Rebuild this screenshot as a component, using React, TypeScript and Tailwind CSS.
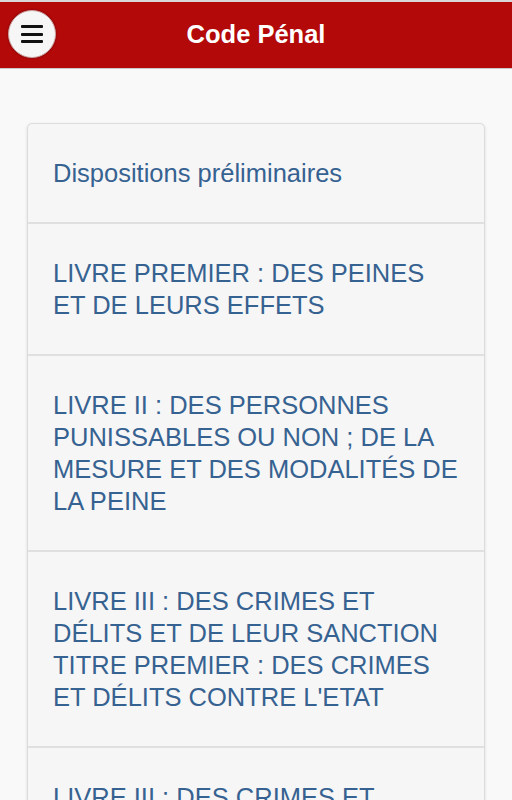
import React from "react";

const items = [
  ["Dispositions préliminaires"],
  ["LIVRE PREMIER : DES PEINES", "ET DE LEURS EFFETS"],
  ["LIVRE II : DES PERSONNES", "PUNISSABLES OU NON ; DE LA", "MESURE ET DES MODALITÉS DE", "LA PEINE"],
  ["LIVRE III : DES CRIMES ET", "DÉLITS ET DE LEUR SANCTION", "TITRE PREMIER : DES CRIMES", "ET DÉLITS CONTRE L'ETAT"],
  ["LIVRE III : DES CRIMES ET", "DÉLITS ET DE LEUR SANCTION"],
];

export default function App() {
  return (
    <div className="w-[512px] h-[800px] overflow-hidden bg-[#f9f9f9]" style={{ fontFamily: '"Liberation Sans", Arial, sans-serif' }}>
      <div className="h-[2px] bg-[#d8d8d8]" />
      <header className="relative h-[67px] bg-[#b30909] border-b border-[#c8c8c8] flex items-center justify-center">
        <button className="absolute left-[8px] top-[8px] w-[48px] h-[48px] rounded-full bg-[#f6f6f6] border border-[#cfa0a0] shadow-[0_0_2px_rgba(0,0,0,0.4)] flex flex-col items-center justify-center gap-[4.5px]">
          <span className="block w-[22px] h-[3px] bg-[#111] rounded-[1px]" />
          <span className="block w-[22px] h-[3px] bg-[#111] rounded-[1px]" />
          <span className="block w-[22px] h-[3px] bg-[#111] rounded-[1px]" />
        </button>
        <h1 className="text-white font-bold text-[25.5px] leading-none">Code Pénal</h1>
      </header>
      <div className="px-[27px] pt-[54px]">
        <div className="rounded-[5px] border border-[#dcdcdc] bg-[#f6f6f6] shadow-[0_1px_3px_rgba(0,0,0,0.12)]">
          {items.map((lines, i) => (
            <div key={i} className={`px-[25px] py-[33px] text-[#366291] text-[25.5px] leading-[32px] ${i > 0 ? "border-t-2 border-[#e0e0e0]" : ""}`}>
              {lines.map((l, j) => (
                <div key={j} className="whitespace-nowrap">{l}</div>
              ))}
            </div>
          ))}
        </div>
      </div>
    </div>
  );
}
